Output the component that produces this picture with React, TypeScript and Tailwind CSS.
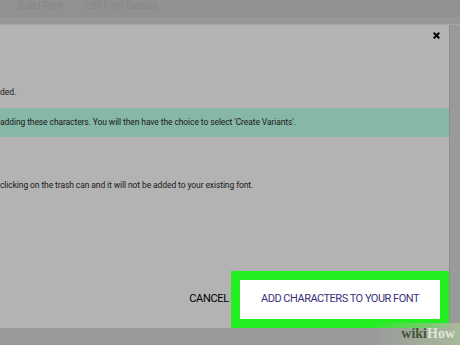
import { X } from 'lucide-react'

export default function App() {
  return (
    <div
      className="relative w-[460px] h-[345px] overflow-hidden bg-[#999999] flex flex-col"
      style={{ fontFamily: 'Roboto, "Liberation Sans", sans-serif' }}
    >
      {/* page header behind the dialog */}
      <div className="h-[17px] bg-[#919191] flex items-start gap-[22px] pl-[18px] text-[10px] leading-[11px] text-[#868686]">
        <span>Build Font</span>
        <span>Edit Font Details</span>
      </div>
      <div className="h-[8px] bg-[#979797] border-b border-[#a5a5a5]" />

      <div className="flex h-[303px]">
        {/* dialog */}
        <div className="w-[449px] bg-[#b3b3b3] flex flex-col text-[#1a1a1a]">
          <div className="h-[20px] flex justify-end items-center pr-[8px]">
            <X className="w-[9px] h-[9px] text-black" strokeWidth={5} />
          </div>
          <p className="mt-[41px] text-[8.5px] leading-[12px]">ded.</p>
          <div className="mt-[10px] h-[29px] bg-[#86b7a7] flex items-center text-[8.5px] tracking-[-0.1px]">
            adding these characters. You will then have the choice to select 'Create Variants'.
          </div>
          <p className="mt-[42px] text-[8.5px] leading-[12px] tracking-[-0.1px]">
            clicking on the trash can and it will not be added to your existing font.
          </p>
          <div className="mt-auto flex justify-end items-center">
            <span className="text-[11px] tracking-tight text-black mr-[2px]">CANCEL</span>
            <div className="w-[218px] h-[57px] bg-[#22ee22] p-[9px]">
              <div className="h-full bg-white flex items-center justify-center text-[11px] tracking-[-0.5px] text-[#3b2f7a]">
                ADD CHARACTERS TO YOUR FONT
              </div>
            </div>
          </div>
        </div>
        <div className="flex-1 bg-[#9a9a9a] border-l border-[#8e8e8e]" />
      </div>

      {/* watermark */}
      <div
        className="absolute right-0 bottom-0 w-[90px] h-[22px] flex items-center justify-end pr-[5px] bg-gradient-to-l from-[#a8b99a] to-transparent"
        style={{ fontFamily: '"Liberation Serif", serif' }}
      >
        <span className="text-[14px] font-bold leading-none text-[#46553a]">wiki</span>
        <span className="text-[14px] font-bold leading-none text-[#dfe6d8]">How</span>
      </div>
    </div>
  )
}
